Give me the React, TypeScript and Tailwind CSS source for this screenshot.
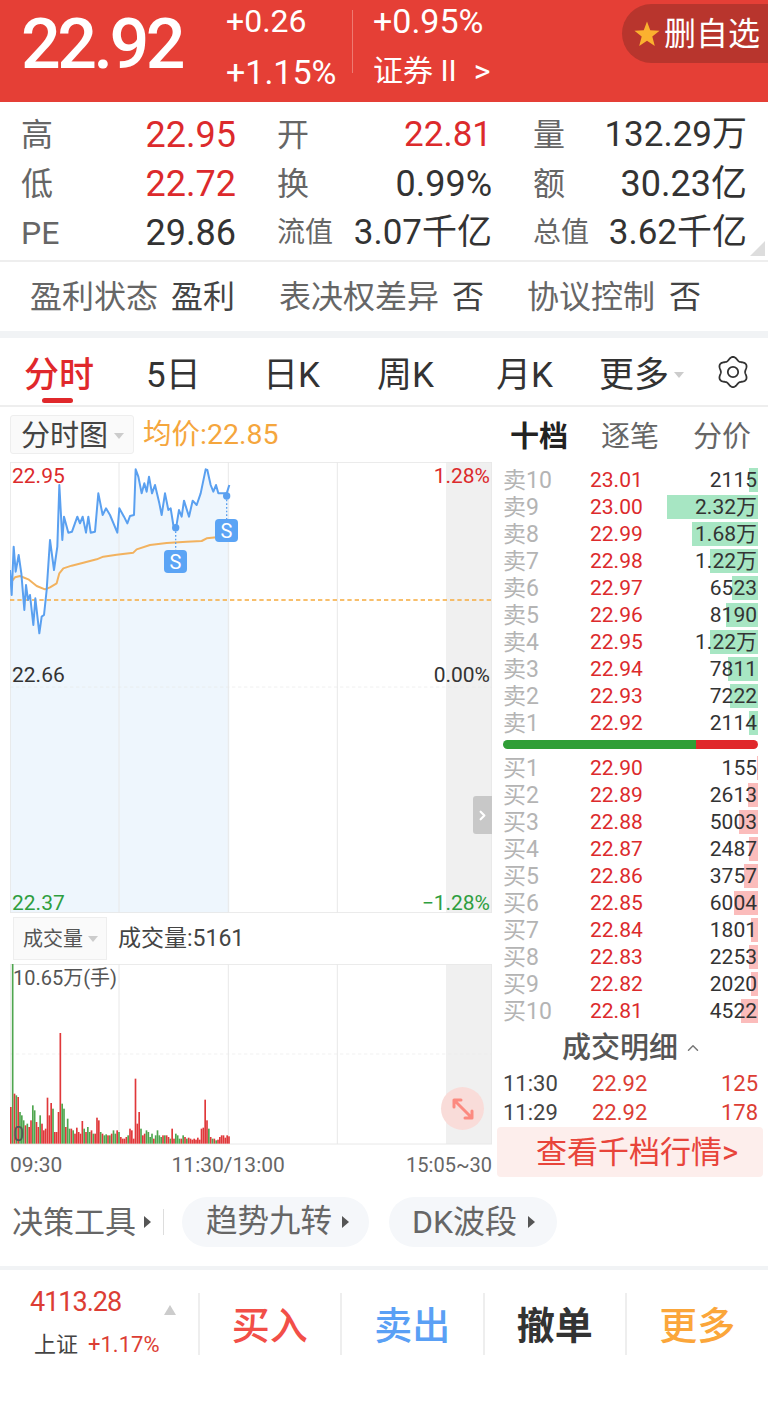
import React from 'react';
import { ChevronUp, ChevronRight } from 'lucide-react';

const FONT = "font-['Roboto','Noto_Sans_CJK_SC',sans-serif]";

const sells: [string, string, string, number][] = [
  ['卖10', '23.01', '2115', 9],
  ['卖9', '23.00', '2.32万', 91],
  ['卖8', '22.99', '1.68万', 66],
  ['卖7', '22.98', '1.22万', 48],
  ['卖6', '22.97', '6523', 26],
  ['卖5', '22.96', '8190', 32],
  ['卖4', '22.95', '1.22万', 48],
  ['卖3', '22.94', '7811', 30],
  ['卖2', '22.93', '7222', 28],
  ['卖1', '22.92', '2114', 9],
];
const buys: [string, string, string, number][] = [
  ['买1', '22.90', '155', 1],
  ['买2', '22.89', '2613', 10],
  ['买3', '22.88', '5003', 19],
  ['买4', '22.87', '2487', 9],
  ['买5', '22.86', '3757', 14],
  ['买6', '22.85', '6004', 24],
  ['买7', '22.84', '1801', 7],
  ['买8', '22.83', '2253', 9],
  ['买9', '22.82', '2020', 7],
  ['买10', '22.81', '4522', 17],
];

const linePts =
  '30,690 35,765 41,620 47,695 56,645 64,700 73,810 78,735 84,780 90,765 100,855 106,775 118,880 125,830 132,825 140,750 150,600 162,690 172,620 178,435 187,600 192,530 205,578 216,575 232,530 240,550 248,530 258,578 265,530 272,578 285,575 295,460 308,525 318,505 330,525 352,578 358,505 372,530 382,550 390,528 402,525 407,388 415,410 425,460 433,430 440,455 447,410 456,460 465,435 478,490 485,525 495,460 505,510 512,505 520,555 528,565 537,510 545,530 552,482 567,530 578,482 590,495 602,460 617,388 622,390 632,435 640,455 648,435 655,460 680,460 688,435';
const avgPts =
  '30,730 45,712 60,708 85,718 110,738 135,748 150,742 170,730 178,700 190,685 215,677 250,668 290,658 310,650 350,644 400,638 410,628 450,615 500,609 560,605 605,603 620,595 650,592 680,590';

const vols = [
  110, -539, 150, -145, 140, -95, -85, -70, 55, -60, 50, 70, -115, -100, 65, 50, -85, 60, 40, 45, 138, 85, 122, -105, 35,
  35, 95, 332, -120, -105, 50, -75, -45, 45, -40, 30, 48, 35, 30, 68, -45, 35, -50, -35, 40, -30, 30, 78, 70, -35, 30,
  -25, -28, 25, -25, 30, -40, -30, 40, -35, 20, 15, 15, 20, -25, 45, 40, 15, 195, 60, 95, -45, 25, 30, -40, -35, -20, -30,
  15, -25, -40, -25, -20, 25, -25, 25, 20, -15, 45, 15, -30, -25, -15, 15, -25, 20, -15, 18, 15, 12, 15, 12, 18, 12, 45,
  48, 132, 70, -45, 20, -15, 15, -10, 12, 20, 25, 25, 18, 25, 22,
];

const gearPath = (() => {
  const pts: string[] = [];
  for (let i = 0; i < 120; i++) {
    const t = (i / 120) * Math.PI * 2;
    const r = 13.6 + 1.5 * Math.cos(6 * t);
    pts.push(`${(16 + r * Math.sin(t)).toFixed(2)} ${(16 - r * Math.cos(t)).toFixed(2)}`);
  }
  return `M${pts.join('L')}Z`;
})();

function Tri({ cls }: { cls: string }) {
  return <span className={`inline-block h-0 w-0 border-x-[5px] border-t-[6px] border-x-transparent ${cls}`} />;
}
function RightTri() {
  return <span className="block h-0 w-0 border-y-[6px] border-l-[7px] border-y-transparent border-l-[#555]" />;
}

function BookRow({ row, bar }: { row: [string, string, string, number]; bar: string }) {
  return (
    <div className="relative flex h-[27px] items-center pl-[6px] pr-[11px]">
      <span className={`absolute right-[10px] top-[1px] h-[24px] ${bar}`} style={{ width: row[3] }} />
      <span className="relative w-[87px] text-[23px] text-[#b4b4b4]">{row[0]}</span>
      <span className="relative text-[21px] text-[#dc2a2c]">{row[1]}</span>
      <span className="relative ml-auto text-[21px] text-[#333]">{row[2]}</span>
    </div>
  );
}

function Stat({
  label,
  value,
  red,
  small,
  narrow,
}: {
  label: string;
  value: string;
  red?: boolean;
  small?: boolean;
  narrow?: boolean;
}) {
  return (
    <div className="flex h-[49px] items-center justify-between">
      <span className={`${small ? 'text-[28px]' : 'text-[32px]'} text-[#666]`}>{label}</span>
      <span className={`${small || narrow ? 'text-[35px]' : 'text-[36px]'} ${red ? 'text-[#dc2a2c]' : 'text-[#333]'}`}>{value}</span>
    </div>
  );
}

function BottomBtn({ text, cls }: { text: string; cls: string }) {
  return (
    <div className={`flex h-[62px] w-[142.5px] items-center justify-center border-l-2 border-[#eee] pt-[4px] text-[38px] ${cls}`}>
      {text}
    </div>
  );
}

export default function App() {
  return (
    <div className={`${FONT} h-[1413px] w-[768px] overflow-hidden bg-white leading-none`}>
      {/* header */}
      <div className="flex h-[102px] bg-[#e53f36] text-white">
        <div className="ml-[21px] w-[205px] pt-[9px] text-[70px] font-medium leading-[70px] tracking-[-3.5px]">22.92</div>
        <div className="w-[126px] pt-[5px]">
          <div className="text-[32px] leading-[32px]">+0.26</div>
          <div className="mt-[19px] text-[34px] leading-[32px]">+1.15%</div>
        </div>
        <div className="mt-[10px] h-[63px] w-px bg-[#ee7a72]" />
        <div className="ml-[20px] w-[249px] pt-[5px]">
          <div className="text-[34px] leading-[32px]">+0.95%</div>
          <div className="mt-[18px] flex items-center text-[30px] leading-[32px]">
            证券 II<span className="ml-[17px] text-[32px]">&gt;</span>
          </div>
        </div>
        <div className="mt-[4px] flex h-[59px] flex-1 items-center rounded-l-[30px] bg-[#b8352d] pl-[12px] text-[32px]">
          <svg viewBox="0 0 24 24" width="26" height="26">
            <polygon points="12,0.5 15,8.6 23.6,9 16.9,14.4 19.2,23 12,18.2 4.8,23 7.1,14.4 0.4,9 9,8.6" fill="#fbb12f" />
          </svg>
          <span className="ml-[4px]">删自选</span>
        </div>
      </div>

      {/* stats */}
      <div className="relative grid h-[160px] grid-cols-[215px_215px_214px] gap-x-[41px] border-b-2 border-[#eee] pl-[21px] pt-[8px]">
        <div>
          <Stat label="高" value="22.95" red />
          <Stat label="低" value="22.72" red />
          <Stat label="PE" value="29.86" />
        </div>
        <div>
          <Stat label="开" value="22.81" red narrow />
          <Stat label="换" value="0.99%" />
          <Stat label="流值" value="3.07千亿" small />
        </div>
        <div>
          <Stat label="量" value="132.29万" narrow />
          <Stat label="额" value="30.23亿" />
          <Stat label="总值" value="3.62千亿" small />
        </div>
        <span className="absolute bottom-[4px] right-[3px] h-0 w-0 border-b-[15px] border-l-[15px] border-b-[#ddd] border-l-transparent" />
      </div>

      {/* flags */}
      <div className="flex h-[76px] items-center border-b-[7px] border-[#f1f3f5] pl-[30px] text-[32px] text-[#666]">
        <span className="w-[249px]">
          盈利状态<span className="ml-[13px] text-[#444]">盈利</span>
        </span>
        <span className="w-[248px]">
          表决权差异<span className="ml-[13px] text-[#444]">否</span>
        </span>
        <span>
          协议控制<span className="ml-[14px] text-[#444]">否</span>
        </span>
      </div>

      {/* tabs */}
      <div className="relative flex h-[69px] items-center border-b-2 border-[#eee] pt-[7px] text-[35px] text-[#333]">
        <span className="relative ml-[24px] w-[122px] font-medium text-[#e0282b]">
          分时
          <span className="absolute left-[18px] top-[40px] h-[5px] w-[31px] rounded-full bg-[#e0282b]" />
        </span>
        <span className="w-[117px]">5日</span>
        <span className="w-[114px]">日K</span>
        <span className="w-[119px]">周K</span>
        <span className="w-[103px]">月K</span>
        <span className="flex items-center">
          更多
          <Tri cls="ml-[5px] border-t-[#ccc]" />
        </span>
        <svg viewBox="0 0 32 32" width="32" height="32" fill="none" stroke="#333" strokeWidth="1.8" className="absolute left-[717px] top-[18px]">
          <path d={gearPath} />
          <circle cx="16" cy="16" r="5.2" />
        </svg>
      </div>

      {/* main */}
      <div className="flex h-[778px]">
        {/* left */}
        <div className="w-[497px] pl-[10px]">
          <div className="flex h-[55px] items-start pt-[8px]">
            <div className="flex h-[39px] w-[124px] items-center rounded-[3px] border border-[#eee] bg-[#fafafa] pl-[10px] pt-[3px] text-[29px] text-[#444]">
              分时图
              <Tri cls="ml-[6px] border-t-[#ccc]" />
            </div>
            <span className="ml-[9px] mt-[6px] text-[28.5px] text-[#f5a63d]">均价:22.85</span>
          </div>

          <div className="relative h-[451px] w-[482px]">
            <svg viewBox="30 366 1446 1353" className="absolute inset-0 h-full w-full">
              <rect x="1338" y="366" width="138" height="1353" fill="#f0f0f0" />
              <polygon points={`${linePts} 688,1719 30,1719`} fill="#eef6fd" />
              <g stroke="#e8e8e8" strokeWidth="3" fill="none">
                <rect x="31" y="367" width="1444" height="1351" />
                <path d="M357 366V1719M685 366V1719M1012 366V1719" />
              </g>
              <path d="M30 1041H1476" stroke="#e8e8e8" strokeWidth="2" strokeDasharray="10 8" />
              <path d="M30 780H1476" stroke="#f6ab3d" strokeWidth="4" strokeDasharray="13 9" />
              <polyline points={avgPts} fill="none" stroke="#f2b25f" strokeWidth="6" strokeLinejoin="round" />
              <polyline points={linePts} fill="none" stroke="#5aa0f0" strokeWidth="6" strokeLinejoin="round" />
              <path d="M527 563V632M680 468V540" stroke="#5aa0f0" strokeWidth="4" strokeDasharray="5 6" />
              <circle cx="527" cy="563" r="11" fill="#5aa0f0" />
              <circle cx="680" cy="468" r="11" fill="#5aa0f0" />
            </svg>
            <span className="absolute left-[154px] top-[88px] flex h-[23px] w-[23px] items-center justify-center rounded-[4px] bg-[#5ba4f5] text-[20px] text-white">S</span>
            <span className="absolute left-[205px] top-[57px] flex h-[23px] w-[23px] items-center justify-center rounded-[4px] bg-[#5ba4f5] text-[20px] text-white">S</span>
            <span className="absolute left-[2px] top-[4px] text-[21px] text-[#dc2a2c]">22.95</span>
            <span className="absolute right-[2px] top-[4px] text-[21px] text-[#dc2a2c]">1.28%</span>
            <span className="absolute left-[2px] top-[203px] text-[21px] text-[#333]">22.66</span>
            <span className="absolute right-[2px] top-[203px] text-[21px] text-[#333]">0.00%</span>
            <span className="absolute left-[2px] top-[431px] text-[21px] text-[#2e9e3f]">22.37</span>
            <span className="absolute right-[2px] top-[431px] text-[21px] text-[#2e9e3f]">−1.28%</span>
            <span className="absolute left-[463px] top-[334px] flex h-[38px] w-[19px] items-center justify-center rounded-l-[3px] bg-[#c8c8c8] text-white">
              <ChevronRight size={15} strokeWidth={3.5} />
            </span>
          </div>

          <div className="flex h-[51px] items-start pl-[3px] pt-[4px]">
            <div className="flex h-[43px] w-[94px] items-center border border-[#eee] bg-[#fafafa] pl-[9px] text-[20px] text-[#555]">
              成交量
              <Tri cls="ml-[5px] border-t-[#ccc]" />
            </div>
            <span className="ml-[11px] mt-[10px] text-[23px] text-[#444]">成交量:5161</span>
          </div>

          <div className="relative h-[181px] w-[482px]">
            <svg viewBox="30 193 1446 543" className="absolute inset-0 h-full w-full">
              <rect x="1338" y="193" width="138" height="540" fill="#f0f0f0" />
              <g stroke="#e8e8e8" strokeWidth="3" fill="none">
                <rect x="31" y="194" width="1444" height="539" />
                <path d="M357 193V733M685 193V733M1012 193V733" />
              </g>
              <path d="M30 463H1476" stroke="#eaeaea" strokeWidth="2" strokeDasharray="10 8" />
              {vols.map((v, i) => (
                <rect
                  key={i}
                  x={30 + i * 5.5}
                  y={732 - Math.abs(v)}
                  width="5"
                  height={Math.abs(v)}
                  fill={v < 0 ? '#4fa64f' : '#e0383a'}
                />
              ))}
            </svg>
            <span className="absolute left-[3px] top-[4px] text-[20px] text-[#555]">10.65万(手)</span>
            <span className="absolute left-[3px] top-[160px] text-[20px] text-[#555]">0</span>
            <span className="absolute left-[431px] top-[123px] flex h-[43px] w-[43px] items-center justify-center rounded-full bg-[#f9dcd9]">
              <svg viewBox="0 0 24 24" width="24" height="24" fill="none" stroke="#fc8a80" strokeWidth="3" strokeLinecap="round" strokeLinejoin="round">
                <path d="M3 10V3H10M3 3L21 21M21 14V21H14" />
              </svg>
            </span>
          </div>

          <div className="flex h-[40px] w-[482px] items-center justify-between text-[21px] text-[#666]">
            <span>09:30</span>
            <span className="mr-[12px]">11:30/13:00</span>
            <span className="text-[20px]">15:05~30</span>
          </div>
        </div>

        {/* right */}
        <div className="w-[271px]">
          <div className="flex h-[60px] items-center pl-[13px] pt-[1px] text-[29px] text-[#666]">
            <span className="w-[91px] font-bold text-[#222]">十档</span>
            <span className="w-[92px]">逐笔</span>
            <span>分价</span>
          </div>
          {sells.map((r) => (
            <BookRow key={r[0]} row={r} bar="bg-[#a7e6c3]" />
          ))}
          <div className="ml-[6px] mt-[3px] flex h-[9px] w-[255px] overflow-hidden rounded-full">
            <span className="w-[193px] bg-[#2f9e36]" />
            <span className="flex-1 bg-[#e0282b]" />
          </div>
          <div className="h-[6px]" />
          {buys.map((r) => (
            <BookRow key={r[0]} row={r} bar="bg-[#fbbcbb]" />
          ))}
          <div className="mt-[5px] flex h-[36px] items-center pl-[65px] text-[29px] font-medium text-[#555]">
            成交明细
            <ChevronUp size={18} className="ml-[6px] text-[#777]" />
          </div>
          <div className="mt-[2px] flex h-[29px] items-center pl-[6px] pr-[10px] pt-[2px] text-[22px] text-[#dc3d34]">
            <span className="w-[89px] text-[#444]">11:30</span>
            <span>22.92</span>
            <span className="ml-auto">125</span>
          </div>
          <div className="flex h-[29px] items-center pl-[6px] pr-[10px] pt-[2px] text-[22px] text-[#dc3d34]">
            <span className="w-[89px] text-[#444]">11:29</span>
            <span>22.92</span>
            <span className="ml-auto">178</span>
          </div>
          <div className="mt-[1px] flex h-[50px] w-[266px] items-center justify-center rounded-[4px] bg-[#fdeeec] pl-[14px] text-[31px] text-[#e8443a]">
            查看千档行情&gt;
          </div>
        </div>
      </div>

      {/* tools */}
      <div className="flex h-[85px] items-center border-b-4 border-[#f1f3f5] pb-[7px] pl-[12px] text-[31px] text-[#666]">
        <span>决策工具</span>
        <span className="ml-[8px]"><RightTri /></span>
        <span className="ml-[12px] h-[26px] w-px bg-[#ddd]" />
        <span className="ml-[18px] flex h-[50px] w-[187px] items-center rounded-full bg-[#f5f7fa] pl-[24px] text-[31.5px]">
          趋势九转
          <span className="ml-[10px]"><RightTri /></span>
        </span>
        <span className="ml-[20px] flex h-[50px] w-[168px] items-center rounded-full bg-[#f5f7fa] pl-[23px] text-[32px]">
          DK波段
          <span className="ml-[11px]"><RightTri /></span>
        </span>
      </div>

      {/* bottom */}
      <div className="flex h-[60px] items-start pt-[23px]">
        <div className="relative h-[62px] w-[197.5px] pl-[30px]">
          <div className="-mt-[2px] flex h-[22px] items-center text-[27px] tracking-[-1px] text-[#dc3d34]">4113.28</div>
          <span className="absolute left-[164px] top-[12px] h-0 w-0 border-x-[6px] border-b-[10px] border-x-transparent border-b-[#ccc]" />
          <div className="ml-[4px] mt-[21px] flex items-center text-[22px] text-[#444]">
            上证<span className="ml-[10px] text-[#dc3d34]">+1.17%</span>
          </div>
        </div>
        <BottomBtn text="买入" cls="text-[#f24f48] font-medium" />
        <BottomBtn text="卖出" cls="text-[#5aa0f5] font-medium" />
        <BottomBtn text="撤单" cls="text-[#333] font-bold" />
        <BottomBtn text="更多" cls="text-[#fba63a] font-medium" />
      </div>
    </div>
  );
}
